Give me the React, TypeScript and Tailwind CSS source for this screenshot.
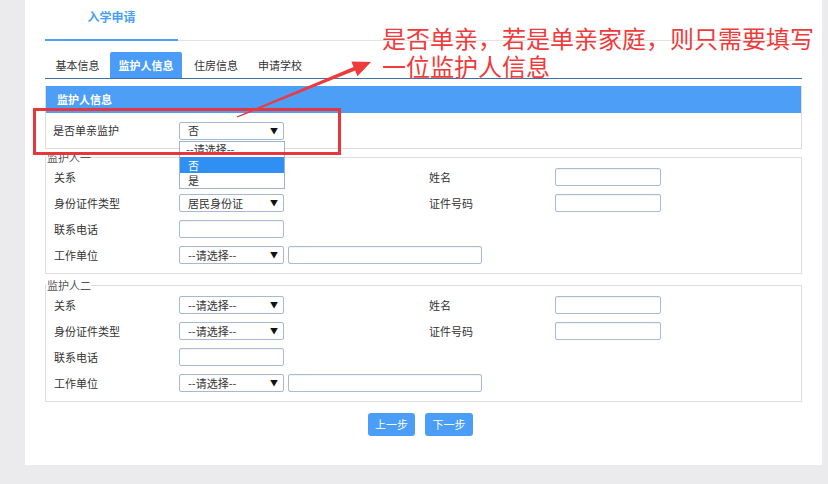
import React from "react";

const font = "font-['Noto_Sans_CJK_SC','Noto_Sans',sans-serif]";

function Select({ value }: { value: string }) {
  return (
    <div className="w-[105px] h-[18px] border border-[#a6b8d2] rounded-[2px] bg-white flex items-center justify-between pl-[8px] pr-[5px] text-[11px] text-[#333]">
      <span>{value}</span>
      <span className="text-[8px] text-[#111]">▼</span>
    </div>
  );
}

function Input({ w = "w-[106px]" }: { w?: string }) {
  return <div className={`${w} h-[18px] border border-[#a9bcd6] rounded-[2px] bg-white shadow-[inset_0_1px_1px_rgba(0,0,0,0.06)]`} />;
}

function Guardian({ title, relation, idType }: { title: string; relation: string; idType: string }) {
  return (
    <fieldset className="border border-[#dddddd] pb-[5px]">
      <legend className="ml-px text-[11px] leading-[14px] text-[#555]">{title}</legend>
      {/* 关系 / 姓名 */}
      <div className="flex items-center h-[26px]">
        <div className="w-[133px] pl-[8px]">关系</div>
        <Select value={relation} />
        <div className="w-[145px]" />
        <div className="w-[126px]">姓名</div>
        <Input />
      </div>
      <div className="flex items-center h-[26px]">
        <div className="w-[133px] pl-[8px]">身份证件类型</div>
        <Select value={idType} />
        <div className="w-[145px]" />
        <div className="w-[126px]">证件号码</div>
        <Input />
      </div>
      <div className="flex items-center h-[26px]">
        <div className="w-[133px] pl-[8px]">联系电话</div>
        <Input w="w-[105px]" />
      </div>
      <div className="flex items-center h-[26px]">
        <div className="w-[133px] pl-[8px]">工作单位</div>
        <Select value="--请选择--" />
        <div className="w-[4px]" />
        <Input w="w-[194px]" />
      </div>
    </fieldset>
  );
}

export default function App() {
  const tabs = [
    { name: "基本信息", w: "w-[65px]" },
    { name: "监护人信息", w: "w-[72px]", active: true },
    { name: "住房信息", w: "w-[68px]" },
    { name: "申请学校", w: "w-[60px]" },
  ];
  return (
    <div className={`relative w-[828px] h-[484px] overflow-hidden bg-[#ebebed] text-[11px] text-[#333] ${font}`}>
      <div className="ml-[25px] w-[797px] h-[465px] bg-white px-[20px]">
        {/* top tab */}
        <div className="flex h-[41px] border-b border-[#e2e2e2]">
          <div className="w-[133px] -mb-px border-b-2 border-[#4a9ff5] flex items-center justify-center pb-[6px] text-[12px] font-semibold text-[#4a9ff5]">
            入学申请
          </div>
        </div>

        {/* step tabs */}
        <div className="mt-[11px] flex h-[27px] border-b border-[#3d6fa8]">
          {tabs.map((t) => (
            <div
              key={t.name}
              className={`${t.w} flex items-center justify-center ${
                t.active ? "bg-[#4a9cf6] text-white font-bold rounded-t-[2px]" : "text-[#333]"
              }`}
            >
              {t.name}
            </div>
          ))}
        </div>

        {/* header panel */}
        <div className="mt-[7px] border border-[#dddddd] border-t-0">
          <div className="h-[27px] bg-[#4d9ef7] flex items-center pl-[11px] text-white font-bold">监护人信息</div>
          <div className="flex items-center h-[35px]">
            <div className="w-[133px] pl-[7px]">是否单亲监护</div>
            <Select value="否" />
          </div>
        </div>

        <div className="mt-px">
          <Guardian title="监护人一" relation="" idType="居民身份证" />
        </div>
        <div className="mt-[4px]">
          <Guardian title="监护人二" relation="--请选择--" idType="--请选择--" />
        </div>

        <div className="mt-[11px] flex justify-center gap-[10px] pr-[6px]">
          <button className="w-[47px] h-[23px] rounded-[3px] bg-[#4a9ef7] text-white text-[11px]">上一步</button>
          <button className="w-[48px] h-[23px] rounded-[3px] bg-[#4a9ef7] text-white text-[11px]">下一步</button>
        </div>
      </div>

      {/* open dropdown */}
      <div className="absolute left-[179px] top-[141px] w-[106px] h-[48px] border border-[#9fb3cf] bg-white text-[11px] text-[#333]">
        <div className="h-[15px] leading-[15px] pl-[6px]">--请选择--</div>
        <div className="h-[16px] leading-[16px] pl-[8px] bg-[#2f8ff3] text-white">否</div>
        <div className="h-[15px] leading-[15px] pl-[8px]">是</div>
      </div>

      {/* annotation */}
      <div className="absolute left-[33px] top-[108px] w-[308px] h-[47px] border-[3px] border-[#e8373c]" />
      <svg className="absolute left-0 top-0" width="828" height="484" viewBox="0 0 828 484">
        <polygon
          points="236.6,116.4 353.6,66.9 351.4,61.4 371,62 357.4,76.2 355.2,70.6 237.4,117.6"
          fill="#ee3a3a"
        />
      </svg>
      <div className="absolute left-[382px] top-[24px] text-[24px] leading-[28px] text-[#ef3b3b] whitespace-nowrap">
        <div className="h-[28px]">是否单亲，若是单亲家庭，则只需要填写</div>
        <div className="h-[28px]">一位监护人信息</div>
      </div>
    </div>
  );
}
